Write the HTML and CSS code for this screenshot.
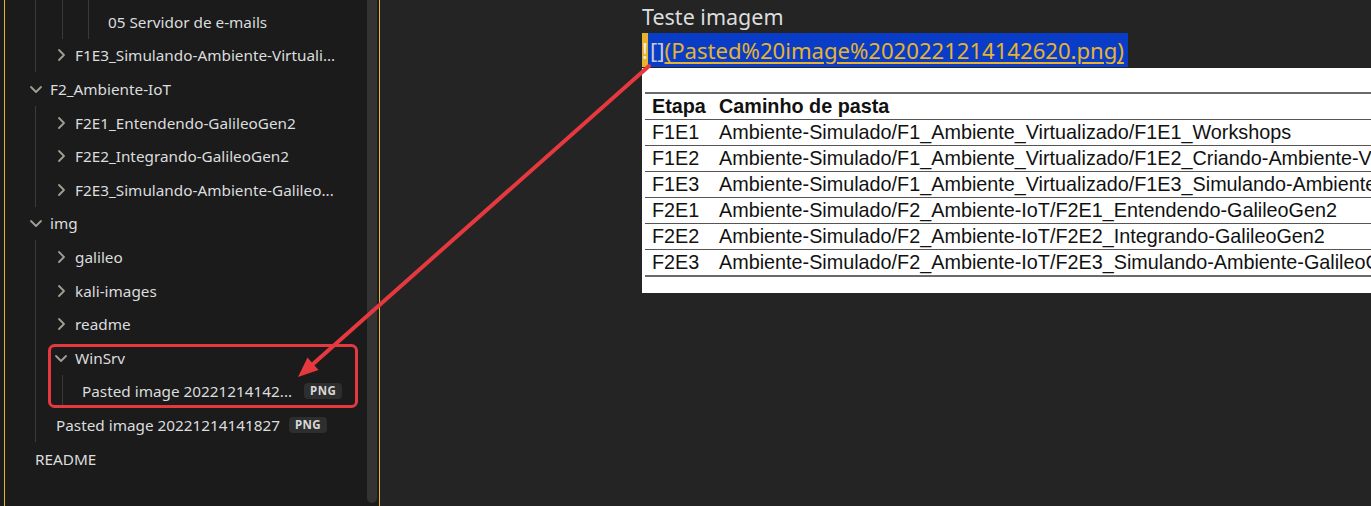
FILE: index.html
```html
<!DOCTYPE html>
<html>
<head>
<meta charset="utf-8">
<link rel="stylesheet" href="styles.css">
</head>
<body>
<div class="app">
  <aside class="sidebar">
    <div class="edge"></div>
    <div class="tree">
      <div class="kids">
        <div class="kids k2">
          <div class="kids k3">
            <div class="spacer"></div>
            <div class="row file d4">05 Servidor de e-mails</div>
          </div>
        </div>
        <div class="row folder d2"><svg class="chev" viewBox="0 0 16 16"><polyline points="6,3 11,8 6,13"/></svg><span>F1E3_Simulando-Ambiente-Virtuali...</span></div>
      </div>
      <div class="row folder d1"><svg class="chev" viewBox="0 0 16 16"><polyline points="3,6 8,11 13,6"/></svg><span>F2_Ambiente-IoT</span></div>
      <div class="kids">
        <div class="row folder d2"><svg class="chev" viewBox="0 0 16 16"><polyline points="6,3 11,8 6,13"/></svg><span>F2E1_Entendendo-GalileoGen2</span></div>
        <div class="row folder d2"><svg class="chev" viewBox="0 0 16 16"><polyline points="6,3 11,8 6,13"/></svg><span>F2E2_Integrando-GalileoGen2</span></div>
        <div class="row folder d2"><svg class="chev" viewBox="0 0 16 16"><polyline points="6,3 11,8 6,13"/></svg><span>F2E3_Simulando-Ambiente-Galileo...</span></div>
      </div>
      <div class="row folder d1"><svg class="chev" viewBox="0 0 16 16"><polyline points="3,6 8,11 13,6"/></svg><span>img</span></div>
      <div class="kids">
        <div class="row folder d2"><svg class="chev" viewBox="0 0 16 16"><polyline points="6,3 11,8 6,13"/></svg><span>galileo</span></div>
        <div class="row folder d2"><svg class="chev" viewBox="0 0 16 16"><polyline points="6,3 11,8 6,13"/></svg><span>kali-images</span></div>
        <div class="row folder d2"><svg class="chev" viewBox="0 0 16 16"><polyline points="6,3 11,8 6,13"/></svg><span>readme</span></div>
        <div class="row folder d2"><svg class="chev" viewBox="0 0 16 16"><polyline points="3,6 8,11 13,6"/></svg><span>WinSrv</span></div>
        <div class="kids k2">
          <div class="row file d3"><span>Pasted image 20221214142...</span><span class="badge b1">PNG</span></div>
        </div>
        <div class="row file d2f"><span>Pasted image 20221214141827</span><span class="badge">PNG</span></div>
      </div>
      <div class="row file d1f">README</div>
    </div>
    <div class="track"><div class="thumb"></div></div>
  </aside>
  <main class="main">
    <div class="title">Teste imagem</div>
    <div class="linkline"><span class="bang">!</span><span class="brk">[]</span><span class="url">(Pasted%20image%2020221214142620.png)</span></div>
    <div class="image">
      <table class="tbl">
        <tr><th class="c1">Etapa</th><th>Caminho de pasta</th></tr>
        <tr><td class="c1">F1E1</td><td>Ambiente-Simulado/F1_Ambiente_Virtualizado/F1E1_Workshops</td></tr>
        <tr><td class="c1">F1E2</td><td>Ambiente-Simulado/F1_Ambiente_Virtualizado/F1E2_Criando-Ambiente-V</td></tr>
        <tr><td class="c1">F1E3</td><td>Ambiente-Simulado/F1_Ambiente_Virtualizado/F1E3_Simulando-Ambiente</td></tr>
        <tr><td class="c1">F2E1</td><td>Ambiente-Simulado/F2_Ambiente-IoT/F2E1_Entendendo-GalileoGen2</td></tr>
        <tr><td class="c1">F2E2</td><td>Ambiente-Simulado/F2_Ambiente-IoT/F2E2_Integrando-GalileoGen2</td></tr>
        <tr><td class="c1">F2E3</td><td>Ambiente-Simulado/F2_Ambiente-IoT/F2E3_Simulando-Ambiente-GalileoG</td></tr>
      </table>
    </div>
  </main>
</div>
<svg class="annot" width="1371" height="506" viewBox="0 0 1371 506">
  <rect x="49.5" y="345.5" width="307" height="61" rx="5" ry="5" fill="none" stroke="#e5393f" stroke-width="3"/>
  <line x1="649" y1="66" x2="313" y2="364" stroke="#e5393f" stroke-width="4" stroke-linecap="round"/>
  <polygon points="298,377 318.5,370 307.5,357.5" fill="#e5393f"/>
</svg>
</body>
</html>
```
FILE: styles.css
```css
html, body {
  margin: 0;
  padding: 0;
  background: #242424;
  overflow: hidden;
}
.app {
  display: flex;
  width: 1371px;
  height: 506px;
  font-family: "Noto Sans", "Open Sans", sans-serif;
}
.sidebar {
  width: 379px;
  flex: none;
  display: flex;
  background: #1b1b1b;
  border-right: 1px solid #e6b32a;
  overflow: hidden;
}
.edge {
  width: 4px;
  flex: none;
}
.tree {
  flex: 1;
  border-left: 1px solid #e6b32a;
  color: #dcddde;
  font-size: 15.3px;
}
.kids {
  margin-left: 30px;
  border-left: 1px solid #3a3a3a;
}
.kids .kids.k2 {
  margin-left: 26px;
}
.kids .kids .kids.k3 {
  margin-left: 25px;
}
.spacer {
  height: 5px;
}
.row {
  height: 33.6px;
  display: flex;
  align-items: center;
  white-space: nowrap;
}
.chev {
  width: 16px;
  height: 16px;
  flex: none;
  margin-right: 6px;
}
.chev polyline {
  fill: none;
  stroke: #a39e95;
  stroke-width: 1.8;
  stroke-linecap: round;
  stroke-linejoin: round;
}
.folder.d1 { padding-left: 23px; }
.folder.d2 { padding-left: 17px; }
.file.d1f { padding-left: 30px; }
.file.d2f { padding-left: 20px; }
.file.d3 { padding-left: 19px; }
.file.d4 { padding-left: 19px; }
.badge {
  margin-left: 9px;
  background: #2e2e2e;
  color: #d8d8d8;
  font-size: 11.5px;
  font-weight: 700;
  line-height: 16px;
  padding: 0 6px;
  border-radius: 4px;
  letter-spacing: 0.4px;
}
.badge.b1 {
  margin-left: 12px;
}
.track {
  width: 13px;
  flex: none;
  display: flex;
  flex-direction: column;
  padding-bottom: 3px;
  box-sizing: border-box;
}
.thumb {
  flex: 1;
  margin-left: 1px;
  width: 10px;
  background: #333333;
  border-radius: 0 0 5px 5px;
}
.main {
  flex: 1;
  padding-left: 262px;
  color: #dcddde;
  overflow: hidden;
}
.title {
  font-size: 21.5px;
  height: 33px;
  line-height: 33px;
}
.linkline {
  display: inline-flex;
  height: 34px;
  line-height: 34px;
  font-size: 22.1px;
  background: #0a3dc7;
  white-space: nowrap;
  padding-right: 4px;
}
.bang {
  background: #e6b32a;
  color: #f2f2f2;
  width: 6px;
  text-align: center;
}
.brk {
  color: #c9c9d6;
  padding-left: 2px;
}
.url {
  color: #e6b32a;
  text-decoration: underline;
  text-underline-offset: 3px;
}
.image {
  margin-top: 1px;
  width: 729px;
  height: 225px;
  background: #ffffff;
  padding: 24px 0 0 3px;
  box-sizing: border-box;
  overflow: hidden;
}
.tbl {
  border-collapse: collapse;
  font-family: "Liberation Sans", Arial, sans-serif;
  font-size: 19.8px;
  color: #111111;
  white-space: nowrap;
  width: 760px;
  border-top: 2px solid #6a6a6a;
  border-bottom: 2px solid #6a6a6a;
}
.tbl th, .tbl td {
  height: 25px;
  padding: 0 7px 0 0;
  border-bottom: 1px solid #555555;
  text-align: left;
  vertical-align: middle;
}
.tbl .c1 {
  padding-left: 7px;
  width: 60px;
}
.annot {
  position: absolute;
  left: 0;
  top: 0;
  pointer-events: none;
}
```
